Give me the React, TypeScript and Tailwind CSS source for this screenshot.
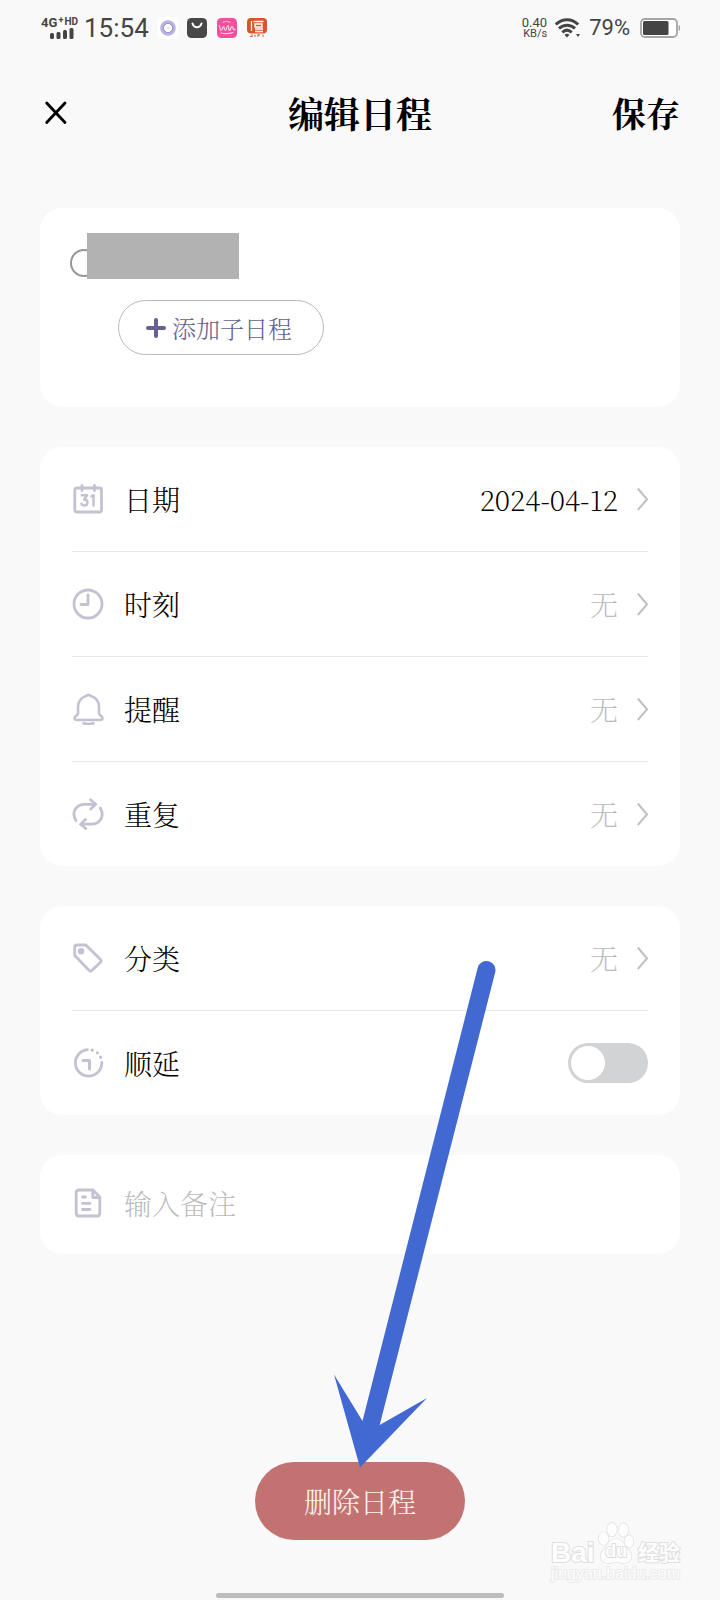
import { useState } from "react";
import type { ReactNode } from "react";

const serif =
  "font-['Noto_Serif_CJK_SC','Liberation_Serif','Noto_Sans_CJK_SC',serif]";

export default function App() {
  const [postpone, setPostpone] = useState(false);
  const [note, setNote] = useState("");

  return (
    <div
      lang="zh-CN"
      className={`relative flex min-h-screen flex-col bg-[#f9f9f9] text-black ${serif}`}
    >
      <StatusBar />

      <header className="grid h-[114px] grid-cols-[1fr_auto_1fr] items-center px-10">
        <button type="button" aria-label="关闭" className="justify-self-start">
          <svg className="h-7 w-7" viewBox="0 0 28 28" fill="none" stroke="#000" strokeWidth="2.800" strokeLinecap="round">
            <path d="M6.700 4 25 23.500M25 4 6.700 23.500" />
          </svg>
        </button>
        <h1 className="text-[36px] leading-[44px] font-bold">编辑日程</h1>
        <button type="button" className="justify-self-end text-[34px] leading-[44px] font-bold">
          保存
        </button>
      </header>

      <main className="mt-[38px] flex flex-col gap-10 px-10">
        <section className="h-[199px] rounded-[22px] bg-white px-[30px] pt-[25px]">
          <div className="flex items-end">
            <input
              type="checkbox"
              aria-label="完成"
              className="mr-[-11px] mb-0.5 h-7 w-7 appearance-none rounded-full border-2 border-[#969696]"
            />
            <div className="relative h-[46px] w-[152px] bg-[#b2b2b2]" />
          </div>
          <button
            type="button"
            className="mt-[21px] ml-12 flex h-[55px] w-[206px] items-center gap-1.5 rounded-full border border-[#b9b9b9] pl-[27px] text-2xl font-light text-[#65618c]"
          >
            <svg className="h-5 w-5" viewBox="0 0 20 20" fill="none" stroke="#66608f" strokeWidth="4" strokeLinecap="round">
              <path d="M10 2v16M2 10h16" />
            </svg>
            添加子日程
          </button>
        </section>

        <section className="divide-y divide-[#e8e8e8] rounded-[22px] bg-white px-8">
          <Row icon={<CalendarIcon />} label="日期" value="2024-04-12" filled />
          <Row icon={<ClockIcon />} label="时刻" value="无" />
          <Row icon={<BellIcon />} label="提醒" value="无" />
          <Row icon={<RepeatIcon />} label="重复" value="无" />
        </section>

        <section className="divide-y divide-[#e8e8e8] rounded-[22px] bg-white px-8">
          <Row icon={<TagIcon />} label="分类" value="无" />
          <label className="flex h-26 items-center">
            <PostponeIcon />
            <span className="ml-5 text-[28px] font-light">顺延</span>
            <input
              type="checkbox"
              role="switch"
              checked={postpone}
              onChange={(e) => setPostpone(e.target.checked)}
              className="ml-auto flex h-10 w-20 appearance-none items-center rounded-full bg-[#d2d3d5] px-[3px] before:h-[34px] before:w-[34px] before:rounded-full before:bg-white checked:justify-end checked:bg-[#65618c]"
            />
          </label>
        </section>

        <section className="rounded-[22px] bg-white px-8">
          <label className="flex h-24 items-center">
            <NoteIcon />
            <input
              type="text"
              aria-label="备注"
              placeholder="输入备注"
              value={note}
              onChange={(e) => setNote(e.target.value)}
              className="ml-5 min-w-0 flex-1 bg-transparent text-[28px] font-extralight outline-none placeholder:text-[#b8b8b8]"
            />
          </label>
          <div className="h-[3px]" />
        </section>
      </main>

      <button
        type="button"
        className="mx-auto mt-[208px] h-[78px] w-[210px] rounded-full bg-[#c37272] text-[28px] font-light text-[#fff3ee]"
      >
        删除日程
      </button>

      <div className="mx-auto mt-auto mb-0.5 h-[5px] w-72 rounded-full bg-[#bcbcbc]" />

      <Pointer />
      <Watermark />
    </div>
  );
}

function StatusBar() {
  return (
    <div className="flex h-14 items-center justify-between px-10 font-[Roboto,sans-serif] text-[#444]">
      <div className="flex items-center">
        <div className="w-[38px]">
          <div className="flex items-start justify-between pl-px font-bold">
            <span className="text-[13px] leading-[11px]">4G</span>
            <span className="text-[9px] leading-[7px]">+</span>
            <span className="text-[10px] leading-[9px]">HD</span>
          </div>
          <svg className="ml-2.5 h-[11px] w-6" viewBox="0 0 24 11" fill="#444">
            <rect x="0" y="5" width="4" height="6" rx="1.500" />
            <rect x="6.500" y="4" width="4" height="7" rx="1.500" />
            <rect x="13" y="2" width="4" height="9" rx="1.500" />
            <rect x="19.500" y="0" width="4" height="11" rx="1.500" />
          </svg>
        </div>
        <span className="ml-1.5 text-[26px] leading-8">15:54</span>
        <svg className="ml-2 h-[22px] w-[22px]" viewBox="0 0 22 22">
          <rect width="22" height="22" rx="5" fill="#fff" />
          <circle cx="11" cy="11" r="6" fill="#fff" stroke="#b9b3e0" strokeWidth="3.600" />
          <circle cx="11" cy="11" r="4.600" fill="none" stroke="#9a93d2" strokeWidth="1" />
          <path d="M10 11h2.500" stroke="#cfcbea" strokeWidth="1.200" />
        </svg>
        <svg className="ml-2 h-5 w-5" viewBox="0 0 20 20">
          <rect width="20" height="20" rx="4.500" fill="#484848" />
          <path d="M5.500 5.500c1.500 5 7.500 5 9 0" fill="none" stroke="#fff" strokeWidth="2" strokeLinecap="round" />
        </svg>
        <svg className="ml-2.5 h-5 w-5" viewBox="0 0 20 20">
          <rect width="20" height="20" rx="4.500" fill="#f2509a" />
          <path d="M6 5c-1-2 8-2 7 0" fill="none" stroke="#fba6cc" strokeWidth="1.200" />
          <path d="M2 7.500c1.500 0 .5 5 2 5s1.500-4 2.500-4 .5 4 2 4 1-5 2.500-5 0 5 1.500 5 1-4 2.500-4 .5 4 3 3M4 15c4 1 8 1 12-.500" fill="none" stroke="#ffd0e4" strokeWidth="1.200" strokeLinecap="round" />
        </svg>
        <svg className="ml-2.5 h-5 w-5" viewBox="0 0 20 20">
          <rect width="20" height="15.500" rx="4" fill="#d9532f" />
          <path d="M4.500 3v10M6.500 3.500h10M8 6h7v3H8zM8 11h8M8 13.500h8" fill="none" stroke="#fff" strokeWidth="1.300" />
          <path d="M3 18.500h2v-2M8 16.800v2M11 18.800v-2h2M16 16.800v2" fill="none" stroke="#c4674f" strokeWidth="1.200" />
        </svg>
      </div>

      <div className="flex items-center">
        <div className="text-right">
          <div className="text-[13px] leading-[12px]">0.40</div>
          <div className="text-[11px] leading-[10px]">KB/s</div>
        </div>
        <svg className="ml-2 h-5 w-[26px]" viewBox="0 0 26 20" fill="none" stroke="#444" strokeWidth="3">
          <path d="M.8 6.500C7.500.2 16.500.2 23.200 6.500M4 10.500c4.800-4.300 11.200-4.300 16 0M7.300 14.300c3-2.700 6.400-2.700 9.400 0" />
          <path d="M9.500 16.700c1.500-1.200 3.500-1.200 5 0L12 19.500zM21 16h4l-2 3z" fill="#444" stroke="none" />
        </svg>
        <span className="ml-2 text-[22px] leading-7">79%</span>
        <svg className="ml-2.5 h-5 w-10" viewBox="0 0 40 20">
          <rect x="1" y="1" width="36" height="18" rx="4" fill="#fff" stroke="#a5a5a5" strokeWidth="1.800" />
          <rect x="3" y="3" width="25.500" height="14" rx="1.500" fill="#444" />
          <path d="M39.300 7.500v5" stroke="#a5a5a5" strokeWidth="1.400" />
        </svg>
      </div>
    </div>
  );
}

function Row({
  icon,
  label,
  value,
  filled,
}: {
  icon: ReactNode;
  label: string;
  value: string;
  filled?: boolean;
}) {
  return (
    <button type="button" className="box-content flex h-26 w-full items-center">
      {icon}
      <span className="ml-5 text-[28px] font-light">{label}</span>
      <span
        className={`ml-auto text-[28px] font-extralight ${
          filled ? "text-black" : "text-[#b8b8b8]"
        }`}
      >
        {value}
      </span>
      <svg className="ml-[18px] h-6 w-3" viewBox="0 0 12 24" fill="none" stroke="#c0c0c0" strokeWidth="2">
        <path d="M1.800 1.500 11 12.300 1.800 23" />
      </svg>
    </button>
  );
}

function Icon({ children }: { children: ReactNode }) {
  return (
    <svg
      className="h-8 w-8 shrink-0"
      viewBox="0 0 32 32"
      fill="none"
      stroke="#c3c2d3"
      strokeWidth="2.800"
      strokeLinecap="round"
      strokeLinejoin="round"
    >
      {children}
    </svg>
  );
}

function CalendarIcon() {
  return (
    <Icon>
      <rect x="2.800" y="5" width="26.700" height="24" rx="2" />
      <path d="M10 2.500v5M22.500 2.500v5" />
      <path d="M9.800 12.200h5.300l-3 4.200c5 0 4 6.200.2 6.200-1.500 0-2.500-.8-2.900-1.800M19.500 13.300l2-1.100v10.400" strokeWidth="2.500" />
    </Icon>
  );
}

function ClockIcon() {
  return (
    <Icon>
      <circle cx="16" cy="16" r="14" />
      <path d="M16 7v9.500H9" />
    </Icon>
  );
}

function BellIcon() {
  return (
    <Icon>
      <path d="M16.500 1.800c2 1.500 10.500 2 10.500 12.200v6.500c0 2 3.500 2.200 3.500 4.500 0 1.300-1 2-2.500 2H5c-1.500 0-2.500-.7-2.500-2 0-2.300 3.500-2.500 3.500-4.500V14C6 3.800 14.500 3.300 16.500 1.800z" strokeWidth="2.600" />
      <path d="M11.500 30.300c3 1 7 1 10 0" strokeWidth="2.600" />
    </Icon>
  );
}

function RepeatIcon() {
  return (
    <Icon>
      <path d="M4 22.500C-1.500 13.500 5 6.300 12.500 6.300H23M18.500 1.800l5.300 4.500-5 4.700" />
      <path d="M28.300 10c5.200 9.500-1.800 16.200-8.800 16.200H9.500M13.500 21.500l-5 4.700 5.300 4.300" />
    </Icon>
  );
}

function TagIcon() {
  return (
    <Icon>
      <path d="M4.500 3h9.300L28.500 17.600c1 1 1 1.700 0 2.700l-8.500 8c-1 1-2 1-3 0L2.700 13.500V4.800c0-1.200.6-1.800 1.800-1.800z" />
      <circle cx="9" cy="9.200" r="1.900" fill="#c3c2d3" />
    </Icon>
  );
}

function PostponeIcon() {
  return (
    <Icon>
      <path d="M15.500 2.700A13.200 13.200 0 1 0 29.800 15.500" />
      <path d="M11 13.500h6.500v8.500" strokeWidth="3" />
      <path d="M20.200 3.200h.01M25.400 5.800h.01M28.600 10.200h.01" strokeWidth="3.200" />
    </Icon>
  );
}

function NoteIcon() {
  return (
    <Icon>
      <path d="M7 3h14l6.800 7v16.200c0 1.800-1 2.800-2.800 2.800H7c-1.800 0-2.800-1-2.800-2.800V5.800C4.200 4 5.200 3 7 3z" />
      <path d="M20.800 3.500v7h6.500M10.500 10h3M10.500 16.300h7.500M10.500 22.500h7.500" />
    </Icon>
  );
}

// Arrow lying over the form, ending on the delete button
function Pointer() {
  return (
    <svg
      className="pointer-events-none absolute top-[956px] left-1/2 -ml-[30px] h-[514px] w-40"
      viewBox="330 956 160 514"
      overflow="visible"
      fill="#4268d2"
      aria-hidden="true"
    >
      <path d="M477.700 967.800A9 9 0 0 1 495.200 972.200L379.700 1425 427 1398 360 1467.500 334 1374.500 362.500 1421z" />
    </svg>
  );
}

function Watermark() {
  return (
    <div
      aria-hidden="true"
      className="pointer-events-none absolute right-10 bottom-4 font-['Liberation_Sans','Noto_Sans_CJK_SC',sans-serif] font-bold text-[#fdfdfd] [paint-order:stroke_fill]"
    >
      <div className="flex items-end justify-between [-webkit-text-stroke:2px_#dfdfdf]">
        <span className="text-[28px] leading-[22px]">Bai</span>
        <div className="relative h-[42px] w-9">
          <svg className="h-full w-full" viewBox="0 0 36 42" fill="#fdfdfd" stroke="#dedede" strokeWidth="1.200">
            <ellipse cx="5.500" cy="16.500" rx="5" ry="6.500" />
            <ellipse cx="14" cy="7.500" rx="4.800" ry="6.800" />
            <ellipse cx="25.500" cy="8" rx="4.800" ry="6.800" />
            <ellipse cx="31" cy="19.500" rx="4.500" ry="6.300" />
            <path d="M18 17c6 0 7.500 5 12 10s5 13-3 14c-4 .5-5-1-9-1s-5 1.500-9 1c-8-1-7.500-9-3-14s6-10 12-10z" />
          </svg>
          <span className="absolute inset-x-0 bottom-1 text-center text-[18px] leading-[18px]">du</span>
        </div>
        <span className="text-[21px] leading-[22px]">经验</span>
      </div>
      <div className="text-[16px] leading-5 font-normal [-webkit-text-stroke:2px_#ebebeb]">
        jingyan.baidu.com
      </div>
    </div>
  );
}
